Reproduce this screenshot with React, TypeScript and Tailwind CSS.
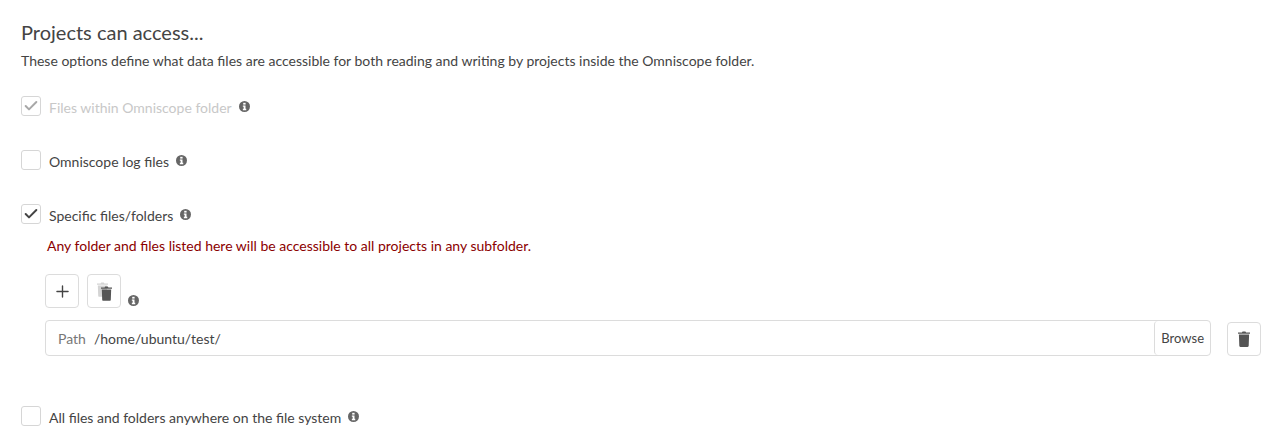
import { Check, Plus } from 'lucide-react';

const InfoIcon = ({ className = '' }: { className?: string }) => (
  <svg viewBox="0 0 12 12" className={`w-[11px] h-[11px] shrink-0 ${className}`}>
    <circle cx="6" cy="6" r="6" fill="#666" />
    <rect x="4.6" y="2" width="2.6" height="1.9" fill="#fff" />
    <path d="M4.2 5h2.9v3.5h.8V10H4.2V8.5h.9V6.4h-.9z" fill="#fff" />
  </svg>
);

const TrashIcon = ({ className = '' }: { className?: string }) => (
  <svg viewBox="0 0 12 16" className={className} fill="currentColor">
    <path d="M0 2.8V1.4h3.9L4.6.4h2.8l.7 1z M8.1 1.4H12v1.4H0z" />
    <path d="M.9 3.6h10.2l-.4 11.2c0 .7-.5 1.2-1.1 1.2H2.4c-.6 0-1.1-.5-1.1-1.2z" />
  </svg>
);

// the one in the toolbar has a faded second bin behind it
const TrashAllIcon = () => (
  <span className="relative block w-[14px] h-[19px]">
    <TrashIcon className="absolute left-0 top-0 w-[11px] h-[15px] text-[#d4d4d4]" />
    <TrashIcon className="absolute left-[4px] top-[4px] w-[11px] h-[15px] text-[#555]" />
  </span>
);

const Option = ({
  label,
  checked = false,
  disabled = false,
  className = '',
}: {
  label: string;
  checked?: boolean;
  disabled?: boolean;
  className?: string;
}) => (
  <div className={`flex items-center h-[20px] ${className}`}>
    <span className="flex items-center justify-center w-[20px] h-[20px] border border-[#d6d6d6] rounded-[3px] bg-white">
      {checked && (
        <Check size={16} strokeWidth={3} className={disabled ? 'text-[#a8a8a8]' : 'text-[#444]'} />
      )}
    </span>
    <span className={`ml-[8px] pt-[2px] text-[14px] ${disabled ? 'text-[#c8c8c8]' : 'text-[#444]'}`}>{label}</span>
    <InfoIcon className="ml-[7px]" />
  </div>
);

export default function App() {
  return (
    <div className="w-[1278px] h-[444px] overflow-hidden bg-white pl-[21px] pt-[20px] font-['Lato',sans-serif] text-[#444]">
      <h2 className="text-[20px] leading-[24px] text-[#444]">Projects can access...</h2>
      <p className="mt-[7px] text-[14px] leading-[20px] text-[#444]">
        These options define what data files are accessible for both reading and writing by projects inside the Omniscope folder.
      </p>

      <Option label="Files within Omniscope folder" checked disabled className="mt-[25px]" />
      <Option label="Omniscope log files" className="mt-[34px]" />
      <Option label="Specific files/folders" checked className="mt-[34px]" />

      <div className="pl-[24px]">
        <p className="ml-[2px] mt-[12px] text-[14px] leading-[20px] text-[#8b0000]">
          Any folder and files listed here will be accessible to all projects in any subfolder.
        </p>

        <div className="flex items-end mt-[18px]">
          <button className="flex items-center justify-center w-[34px] h-[34px] border border-[#dcdcdc] rounded-[4px] bg-white">
            <Plus size={19} strokeWidth={1.75} className="text-[#444]" />
          </button>
          <button className="flex items-center justify-center ml-[8px] w-[34px] h-[34px] border border-[#dcdcdc] rounded-[4px] bg-white">
            <TrashAllIcon />
          </button>
          <InfoIcon className="ml-[7px] mb-[3px] translate-y-[1px]" />
        </div>

        <div className="flex items-end mt-[12px]">
          <div className="flex items-center w-[1166px] h-[36px] border border-[#dcdcdc] rounded-[4px] text-[14px]">
            <span className="pl-[12px] text-[#777]">Path</span>
            <span className="flex-1 pl-[8px] text-[#444]">/home/ubuntu/test/</span>
            <button className="h-full px-[6px] pt-[1px] border-l border-[#dcdcdc] rounded-[4px] text-[13px] text-[#444]">Browse</button>
          </div>
          <button className="flex items-center justify-center ml-[16px] w-[34px] h-[34px] border border-[#dcdcdc] rounded-[4px] bg-white">
            <TrashIcon className="w-[12px] h-[16px] text-[#555]" />
          </button>
        </div>
      </div>

      <Option label="All files and folders anywhere on the file system" className="mt-[50px]" />
    </div>
  );
}
